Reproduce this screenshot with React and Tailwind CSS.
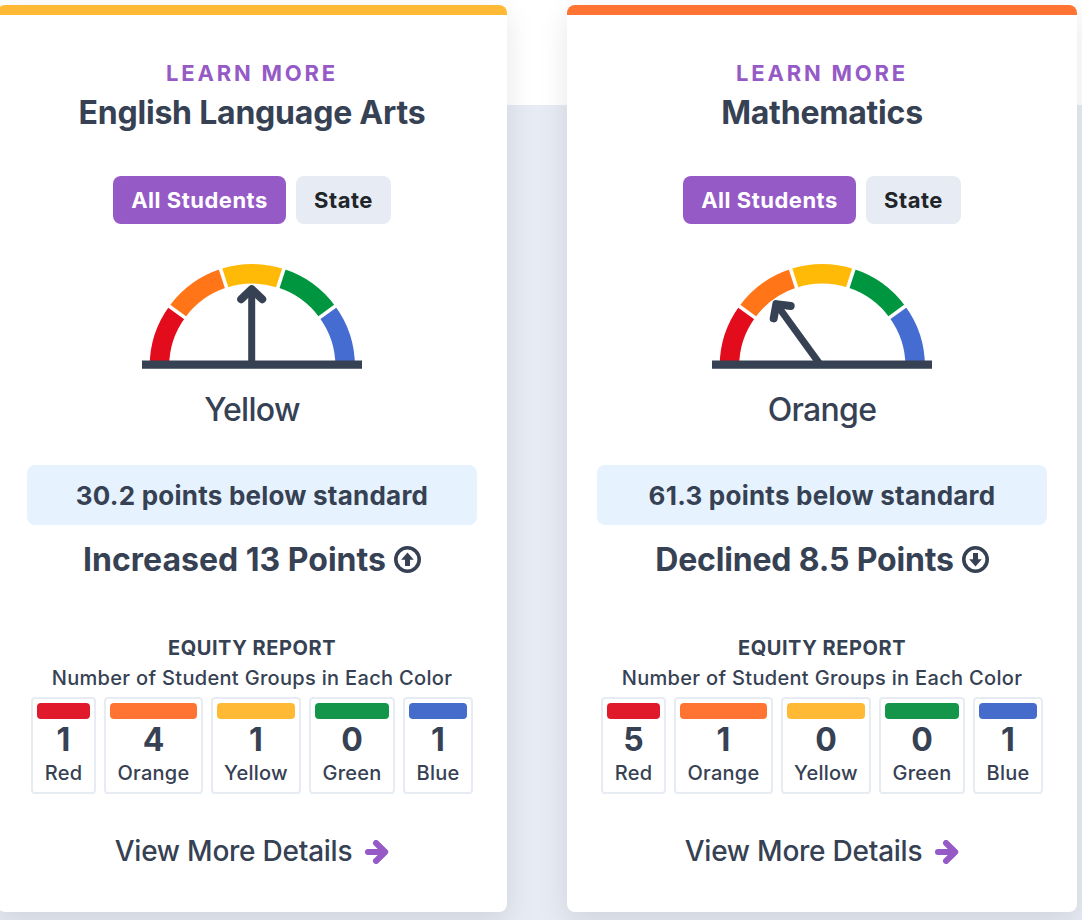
import React from 'react';

const INDICATORS = [
    {
        title: 'English Language Arts',
        level: 'Yellow',
        needle: 0,
        accent: 'bg-[#ffb935]',
        status: '30.2 points below standard',
        change: 'Increased 13 Points',
        changeTracking: 'tracking-normal',
        direction: 'up',
        counts: [1, 4, 1, 0, 1]
    },
    {
        title: 'Mathematics',
        level: 'Orange',
        needle: -36,
        accent: 'bg-[#ff7433]',
        status: '61.3 points below standard',
        change: 'Declined 8.5 Points',
        changeTracking: 'tracking-[-0.18px]',
        direction: 'down',
        counts: [5, 1, 0, 0, 1]
    }
];

const GROUPS = [
    { label: 'Red', bar: 'bg-[#e01a2b]', width: 'w-[65px]' },
    { label: 'Orange', bar: 'bg-[#ff7433]', width: 'w-[99px]' },
    { label: 'Yellow', bar: 'bg-[#ffb935]', width: 'w-[90px]' },
    { label: 'Green', bar: 'bg-[#15954a]', width: 'w-[86px]' },
    { label: 'Blue', bar: 'bg-[#466ccb]', width: 'w-[70px]' }
];

const ArrowRight = () => (
    <svg width="24" height="24" viewBox="0 0 24 24" fill="none" stroke="#965ac7" strokeWidth="6" strokeLinecap="round" strokeLinejoin="round" className="mt-0.5">
        <path d="M3 12H19" />
        <path d="M11 3L20.2 12L11 21" />
    </svg>
);

const ChangeIcon = ({ direction }) => (
    <svg width="27" height="27" viewBox="0 0 27 27" className={direction === 'down' ? 'mb-px rotate-180' : 'mb-px'}>
        <circle cx="13.5" cy="13.5" r="11.7" fill="none" stroke="currentColor" strokeWidth="3.6" />
        <path d="M13.5 6.6L19.8 13.8H16V20H11V13.8H7.2Z" fill="currentColor" />
    </svg>
);

const Gauge = ({ needle }) => (
    <svg width="220" height="110" viewBox="0 0 220 110" className="block" fill="none">
        {/* arc runs from red on the left to blue on the right */}
        <g strokeWidth="19.5">
            <path d="M17.4 106.5A93 92.6 0 0 1 35.16 52.04" stroke="#e20c1c" />
            <path d="M35.16 52.04A93 92.6 0 0 1 81.66 18.35" stroke="#ff7518" />
            <path d="M81.66 18.35A93 92.6 0 0 1 138.94 18.35" stroke="#ffba08" />
            <path d="M138.94 18.35A93 92.6 0 0 1 185.44 52.04" stroke="#009640" />
            <path d="M185.44 52.04A93 92.6 0 0 1 203.2 106.5" stroke="#456cd0" />
        </g>
        <g stroke="#fff" strokeWidth="3.6">
            <path d="M44.7 58.9L25.2 44.7" />
            <path d="M85.2 29.5L77.7 6.4" />
            <path d="M135.2 29.5L142.7 6.4" />
            <path d="M175.7 58.9L195.2 44.7" />
        </g>
        <g transform={`rotate(${needle} 110 106.5)`} stroke="#364153" strokeLinecap="round" strokeLinejoin="round">
            <path d="M109.7 103V30" strokeWidth="7" />
            <path d="M99.2 39.2L109.7 29.2L120.2 39.2" strokeWidth="8" />
        </g>
        <path d="M0 101H220V110H0Z" fill="#fff" />
        <path d="M0 100.6H220V108.8H0Z" fill="#364153" />
    </svg>
);

const GroupTile = ({ group, count }) => (
    <div className={`${group.width} h-[97px] border-2 border-[#e7ecf3] rounded-sm p-1 flex flex-col items-center`}>
        <div className={`${group.bar} w-full h-4 rounded`} />
        <span className="mt-px -mb-px text-[32px] leading-10 font-bold">{count}</span>
        <span className="text-[20px] leading-7 font-medium tracking-[0.25px]">{group.label}</span>
    </div>
);

const IndicatorCard = ({ data }) => (
    <div className="w-[510px] h-[907px] shrink-0 bg-white rounded-lg overflow-hidden shadow-[0_10px_30px_rgba(0,0,0,0.1)] flex flex-col items-center whitespace-nowrap">
        <div className={`${data.accent} w-full h-2.5`} />

        <span className="mt-[44px] text-[22px] leading-7 font-bold tracking-[2.8px] text-[#965ac7]">LEARN MORE</span>
        <h2 className="mt-px text-[32px] leading-[50px] font-bold tracking-[-0.22px]">{data.title}</h2>

        <div className="mt-[38px] flex gap-2.5 text-[22px] font-bold tracking-[0.5px]">
            <button className="w-[173px] h-12 rounded-lg bg-[#965ac7] text-white">All Students</button>
            <button className="w-[95px] h-12 rounded-lg bg-[#e7ecf4] text-[#212529]">State</button>
        </div>

        <div className="mt-9">
            <Gauge needle={data.needle} />
        </div>
        <span className="mt-5 text-[32px] leading-10 font-medium tracking-[-0.7px]">{data.level}</span>

        <div className="mt-[35px] w-[450px] h-[60px] rounded-lg bg-[#e6f3ff] flex items-center justify-center text-[26px] font-bold tracking-[0.23px]">
            {data.status}
        </div>
        <div className={`mt-[15px] h-10 flex items-center gap-2 text-[32px] font-bold ${data.changeTracking}`}>
            {data.change}
            <ChangeIcon direction={data.direction} />
        </div>

        <span className="mt-[54px] text-[20px] leading-7 font-bold tracking-[0.55px]">EQUITY REPORT</span>
        <span className="mt-0.5 text-[20px] leading-7 font-medium tracking-[0.32px]">Number of Student Groups in Each Color</span>
        <div className="mt-[5px] flex gap-2">
            {GROUPS.map((group, i) => (
                <GroupTile key={group.label} group={group} count={data.counts[i]} />
            ))}
        </div>

        <a className="mt-[37px] h-10 flex items-center gap-[13px] text-[28px] font-medium tracking-[-0.24px]">
            <span>View More Details</span>
            <ArrowRight />
        </a>
    </div>
);

export default function App() {
    return (
        <div className="w-full h-screen overflow-hidden bg-linear-to-b from-white from-[105px] to-[#e7ebf4] to-[105px] font-['Inter','Liberation_Sans',sans-serif] text-[#364153]">
            <div className="-ml-[3px] pt-[5px] flex gap-[60px]">
                {INDICATORS.map((data) => (
                    <IndicatorCard key={data.title} data={data} />
                ))}
            </div>
        </div>
    );
}
